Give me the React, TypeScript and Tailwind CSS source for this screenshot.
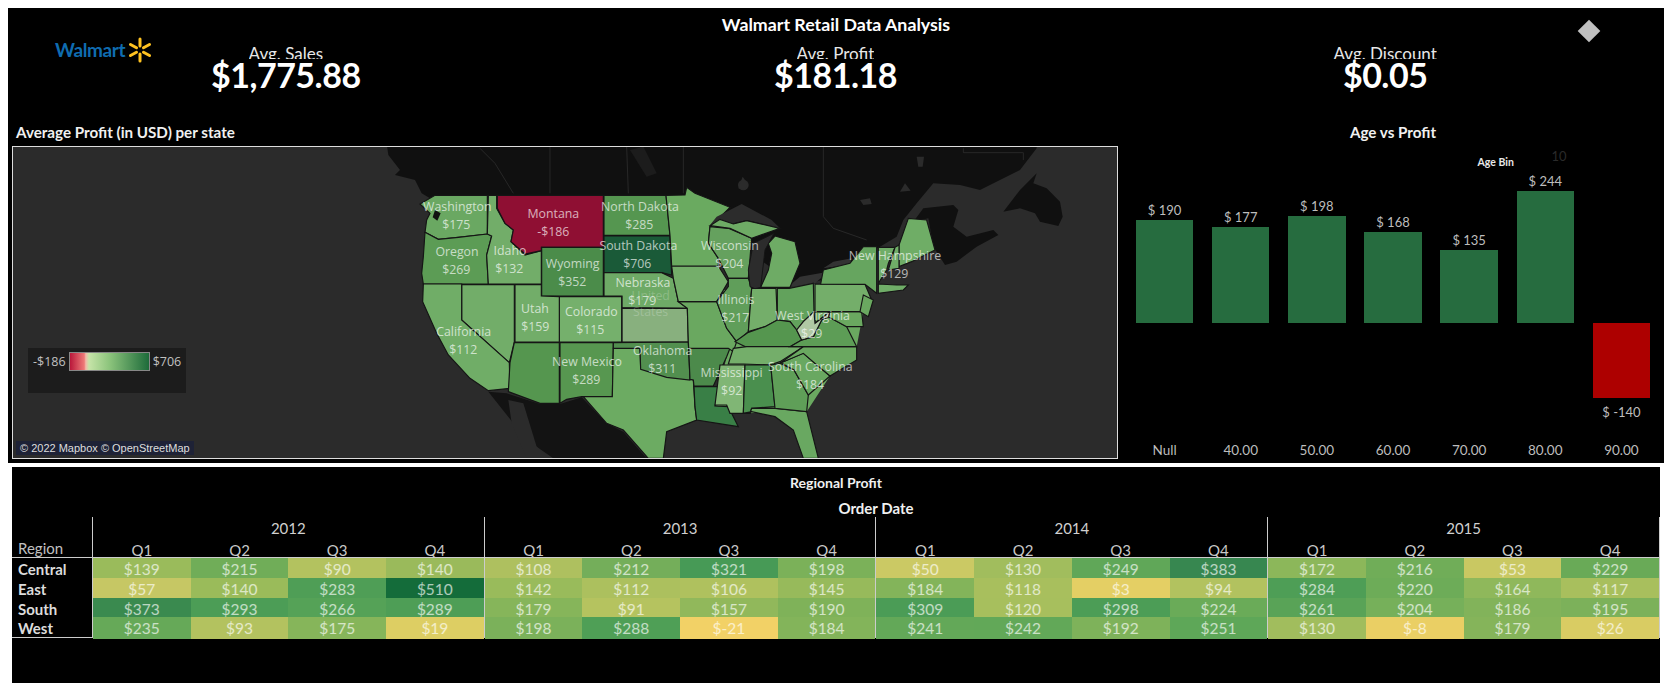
import React from "react";

type Shape = { p: string; f: string };

const west: Shape[] = [
  { p: "1030,480 1115,475 1230,475 1305,462 1455,463 1450,545 1430,650 1350,738 1280,845 1090,850 1005,825 1040,680", f: "#6aa860" },
  { p: "120,222 165,196 322,196 322,312 235,322 175,328 135,307 140,270 150,250", f: "#6aa862" },
  { p: "135,307 175,328 235,322 322,312 335,318 320,375 325,462 130,462 125,430 130,380", f: "#5c9c55" },
  { p: "325,196 350,196 350,235 375,280 400,300 393,335 435,375 484,362 484,462 325,462 320,375 335,318 322,312", f: "#72ad69" },
  { p: "352,196 670,196 670,352 484,352 484,362 435,372 393,335 400,300 375,280 352,235", f: "#8f0f33" },
  { p: "672,196 858,196 870,316 672,316", f: "#559650" },
  { p: "672,318 870,318 875,435 845,428 672,428", f: "#1a5a38" },
  { p: "485,352 670,352 670,498 485,498", f: "#4b8c4a" },
  { p: "672,428 845,428 880,445 895,515 922,535 726,533 726,498 672,498", f: "#6eaa66" },
  { p: "726,535 922,535 925,636 726,636", f: "#88b07e" },
  { p: "538,500 725,500 725,636 538,636", f: "#75b06c" },
  { p: "405,464 484,464 484,498 538,500 538,636 405,636", f: "#72ad69" },
  { p: "245,464 403,464 403,636 388,698 245,570", f: "#72ad69" },
  { p: "130,462 245,462 245,570 388,698 390,775 325,782 270,745 205,675 170,610 128,515", f: "#70ad67" },
  { p: "403,638 538,638 538,820 480,820 385,785 390,698", f: "#55964f" },
  { p: "540,638 700,638 697,800 605,800 560,808 540,820", f: "#579750" },
  { p: "700,655 780,655 782,715 860,735 940,750 945,830 950,870 860,905 850,985 805,985 730,900 680,880 610,800 697,800", f: "#6cab62" },
  { p: "700,638 925,636 930,750 860,742 782,718 780,655 700,655", f: "#528f4f" },
  { p: "926,655 1050,655 1040,680 1000,768 942,768 940,750 930,748", f: "#4c8a4b" },
  { p: "942,770 1020,770 1005,828 1045,830 1075,890 950,870 945,830", f: "#397f46" },
  { p: "895,515 1010,515 1040,595 1070,635 1060,665 1045,655 926,655 925,636 922,535", f: "#6aa860" },
  { p: "875,408 1015,408 1045,455 1010,515 895,515 880,445", f: "#74ae6a" },
  { p: "858,196 915,195 920,172 945,190 1050,232 990,290 985,340 1015,385 1015,408 875,408 870,316", f: "#6aaa60" },
  { p: "990,290 1045,295 1115,325 1105,445 1045,445 1015,385 985,340", f: "#65a15e" },
  { p: "1045,445 1105,445 1115,475 1105,605 1070,635 1040,595 1010,515 1045,470", f: "#609e5a" },
];

const east: Shape[] = [
  { p: "30,287 60,268 100,282 140,272 240,295 155,325 90,295", f: "#6eab65" },
  { p: "182,472 205,420 215,370 205,340 225,318 285,335 300,400 270,472", f: "#6eab65" },
  { p: "155,475 228,475 232,570 195,590 145,605", f: "#74ae6a" },
  { p: "232,475 268,475 340,460 342,545 310,575 290,600 270,575 232,570", f: "#62a25c" },
  { p: "105,635 145,607 195,590 232,570 270,575 290,600 305,630 270,650 140,652", f: "#55964f" },
  { p: "85,702 100,655 140,650 310,650 240,695 210,705 130,702", f: "#74ae6a" },
  { p: "45,825 60,705 135,705 130,850 90,850 80,825", f: "#80b675" },
  { p: "135,705 212,705 225,830 155,835 150,850 130,850", f: "#4a8f4e" },
  { p: "130,850 150,850 155,835 225,835 320,845 355,985 310,985 280,900 225,860 155,845", f: "#69a861" },
  { p: "212,705 240,700 282,720 325,795 320,845 225,835", f: "#5f9f58" },
  { p: "242,698 310,670 345,700 390,738 325,795 282,720", f: "#69a861" },
  { p: "240,700 310,650 470,650 470,690 390,738 345,700 310,670", f: "#6aa860" },
  { p: "270,650 305,630 340,620 365,570 385,560 440,590 470,650", f: "#5d9d56" },
  { p: "345,545 485,545 490,590 440,590 385,560 390,545 345,580", f: "#6aa860" },
  { p: "290,600 310,575 342,545 345,580 390,545 385,560 365,570 340,620 305,630", f: "#b0c9a4" },
  { p: "345,462 495,463 515,510 485,545 345,545", f: "#74ae6a" },
  { p: "362,462 370,420 450,400 490,350 530,350 530,490 495,463", f: "#66a55f" },
  { p: "490,495 520,510 505,560 480,545", f: "#6aa860" },
  { p: "597,345 625,265 680,270 705,360 635,395 597,410", f: "#6fad66" },
  { p: "535,352 585,352 565,400 560,420 535,460", f: "#70ad68" },
  { p: "585,352 597,345 597,415 565,420", f: "#70ad68" },
  { p: "535,462 590,465 625,465 610,480 535,490", f: "#70ad68" },
];

const labels: [string, string, number, number, number, number][] = [
  ["Washington", "$175", 232, 231, 229, 284],
  ["Montana", "-$186", 520, 252, 520, 305],
  ["North Dakota", "$285", 780, 231, 778, 284],
  ["Oregon", "$269", 231, 366, 229, 419],
  ["Idaho", "$132", 390, 362, 388, 416],
  ["Wyoming", "$352", 578, 402, 577, 455],
  ["South Dakota", "$706", 775, 347, 772, 401],
  ["Wisconsin", "$204", 1050, 347, 1048, 401],
  ["Nebraska", "$179", 789, 458, 787, 512],
  ["Illinois", "$217", 1068, 510, 1066, 563],
  ["Utah", "$159", 465, 537, 466, 590],
  ["Colorado", "$115", 634, 545, 631, 599],
  ["California", "$112", 251, 605, 250, 658],
  ["Oklahoma", "$311", 848, 662, 847, 716],
  ["New Mexico", "$289", 621, 695, 619, 749],
  ["Mississippi", "$92", 1055, 728, 1055, 781],
  ["New Hampshire", "$129", 1545, 378, 1543, 431],
  ["West Virginia", "$29", 1298, 558, 1295, 611],
  ["South Carolina", "$184", 1291, 711, 1290, 764],
];

const bars = [
  { axis: "Null", v: 190 },
  { axis: "40.00", v: 177 },
  { axis: "50.00", v: 198 },
  { axis: "60.00", v: 168 },
  { axis: "70.00", v: 135 },
  { axis: "80.00", v: 244 },
  { axis: "90.00", v: -140 },
];

const regions = ["Central", "East", "South", "West"];
const heat: { year: string; rows: [string, string][][] }[] = [
  {
    year: "2012",
    rows: [
      [["$139", "#9abb5b"], ["$215", "#70ad58"], ["$90", "#b3c25f"], ["$140", "#9aba5b"]],
      [["$57", "#c6c764"], ["$140", "#9abb5a"], ["$283", "#4f9e56"], ["$510", "#146c3a"]],
      [["$373", "#3a8a4f"], ["$293", "#4c9d56"], ["$266", "#55a257"], ["$289", "#4e9e56"]],
      [["$235", "#66a958"], ["$93", "#b3c25f"], ["$175", "#86b55a"], ["$19", "#ddce63"]],
    ],
  },
  {
    year: "2013",
    rows: [
      [["$108", "#aec05f"], ["$212", "#74ae5a"], ["$321", "#479a56"], ["$198", "#7bb159"]],
      [["$142", "#99bb5b"], ["$112", "#acc05e"], ["$106", "#afc15e"], ["$145", "#97ba5b"]],
      [["$179", "#86b55a"], ["$91", "#b5c35f"], ["$157", "#91b85b"], ["$190", "#7fb259"]],
      [["$198", "#7bb15a"], ["$288", "#4f9f56"], ["$-21", "#f2d166"], ["$184", "#83b45a"]],
    ],
  },
  {
    year: "2014",
    rows: [
      [["$50", "#cbc964"], ["$130", "#a1bd5d"], ["$249", "#60a758"], ["$383", "#378750"]],
      [["$184", "#83b45a"], ["$118", "#a8bf5d"], ["$3", "#e4cf64"], ["$94", "#b2c25f"]],
      [["$309", "#4b9c56"], ["$120", "#a7bf5d"], ["$298", "#4c9d56"], ["$224", "#6aab58"]],
      [["$241", "#63a858"], ["$242", "#62a858"], ["$192", "#7eb25a"], ["$251", "#5ea758"]],
    ],
  },
  {
    year: "2015",
    rows: [
      [["$172", "#8cb75a"], ["$216", "#70ad58"], ["$53", "#c9c862"], ["$229", "#69aa57"]],
      [["$284", "#4e9e56"], ["$220", "#6dac58"], ["$164", "#8fb85b"], ["$117", "#a8bf5d"]],
      [["$261", "#59a357"], ["$204", "#76b05a"], ["$186", "#82b35a"], ["$195", "#7cb15a"]],
      [["$130", "#a1bd5d"], ["$-8", "#eacf64"], ["$179", "#85b45a"], ["$26", "#d9cc63"]],
    ],
  },
];

function Kpi({ label, value }: { label: string; value: string }) {
  return (
    <div className="flex flex-col items-center">
      <div className="h-[15px] overflow-hidden pt-[1px] text-[17px] leading-[18px] text-[#e8e8e8]">{label}</div>
      <div className="-mt-[1px] text-[34px] font-bold leading-[34px] tracking-[-0.5px] text-white">{value}</div>
    </div>
  );
}

function UsMap() {
  return (
    <svg viewBox="13 147 1104 311" className="absolute inset-0 h-full w-full">
      <rect x="13" y="147" width="1104" height="311" fill="#2b2b2b" />
      <g transform="translate(380 130) scale(0.33333)">
        <polygon points="20,40 25,75 60,120 45,135 105,150 125,190 150,205 900,205 1000,285 1250,470 1400,430 1450,380 1550,320 1570,270 1610,220 1660,160 1740,165 1800,180 1920,120 1970,55 1970,40" fill="#101010" />
        <polygon points="325,785 380,790 480,822 540,822 605,802 680,880 730,905 800,985 800,1000 520,1000 400,880" fill="#131313" />
        <polygon points="385,810 430,820 470,950 520,985 440,985 395,880" fill="#2b2b2b" />
        <polygon points="760,905 850,905 850,985 800,985" fill="#131313" />
        <polyline points="510,50 510,190" stroke="#333333" strokeWidth="2" fill="none" />
        <polyline points="740,50 745,190" stroke="#333333" strokeWidth="2" fill="none" />
        <polyline points="910,50 910,190" stroke="#333333" strokeWidth="2" fill="none" />
        <polyline points="300,55 345,100 400,190" stroke="#333333" strokeWidth="2" fill="none" />
        <circle cx="1090" cy="165" r="16" fill="#2b2b2b" />
        <polygon points="750,60 790,50 830,130 800,140" fill="#1c1c1c" />
        {west.map((s, i) => (
          <polygon key={s.p} points={s.p} fill={s.f} stroke={i === 0 ? "none" : "#151515"} strokeWidth="3.5" />
        ))}
        <polygon points="165,240 182,250 172,272 158,262" fill="#101010" />
      </g>
      <g transform="translate(700 130) scale(0.33333)">
        <polygon points="640,275 670,235 760,225 775,240 760,290 800,320 880,300 895,315 830,350 770,395 735,405 700,350 685,265" fill="#101010" />
        <polygon points="910,245 960,180 1010,130 1000,160 1040,175 1080,215 1088,260 1075,288 1020,275 1005,250 960,235" fill="#101010" />
        <polyline points="370,50 370,260 400,295 500,330" stroke="#333333" strokeWidth="2" fill="none" />
        <polyline points="790,55 790,68 970,68 970,90" stroke="#333333" strokeWidth="2" fill="none" />
        <polygon points="128,140 142,160 135,180 115,175" fill="#2b2b2b" />
        <polygon points="480,210 510,205 515,222 490,225" fill="#2b2b2b" />
        <polygon points="615,160 632,182 600,185" fill="#2b2b2b" />
        <polygon points="650,80 672,80 668,110 655,110" fill="#2b2b2b" />
        <polygon points="30,285 50,260 125,222 215,270 240,295 140,270 100,280" fill="#2c2c2c" />
        <polygon points="270,465 300,440 385,425 345,460 300,482" fill="#333333" />
        <polygon points="370,415 400,395 455,385 450,405 390,412" fill="#333333" />
        {east.map((s) => (
          <polygon key={s.p} points={s.p} fill={s.f} stroke="#151515" strokeWidth="3.5" />
        ))}
        <polygon points="150,470 145,420 160,340 222,310 195,360 182,472 165,476" fill="#2c2c2c" stroke="#151515" strokeWidth="3" />
      </g>
      <g transform="translate(380 130) scale(0.33333)" className="font-['Open_Sans',sans-serif]" fontSize="37" textAnchor="middle" dominantBaseline="central">
        <text x="812" y="497" fill="#ffffff" fillOpacity="0.22">United</text>
        <text x="812" y="545" fill="#ffffff" fillOpacity="0.22">States</text>
        {labels.map(([name, val, x1, y1, x2, y2]) => (
          <g key={name} fill="#ffffff" fillOpacity="0.68">
            <text x={x1} y={y1}>{name}</text>
            <text x={x2} y={y2}>{val}</text>
          </g>
        ))}
      </g>
    </svg>
  );
}

function AgeChart() {
  return (
    <div className="relative grid h-[317px] grid-cols-7">
      <span className="absolute left-[351px] top-[9px] text-[10.5px] font-bold leading-[14px] text-[#e8e8e8]">Age Bin</span>
      <span className="absolute left-[425px] top-[3px] text-[13px] leading-[14px] text-[#2a2a2a]">10</span>
      {bars.map((b) => (
        <div key={b.axis} className="flex flex-col items-center">
          <div className="flex h-[177px] flex-col items-center justify-end">
            {b.v > 0 && (
              <>
                <span className="mb-[2px] text-[13px] leading-[16px] text-[#bdbdbd]">$ {b.v}</span>
                <div className="w-[57.5px] bg-[#266c3f]" style={{ height: b.v * 0.541 }} />
              </>
            )}
          </div>
          <div className="flex h-[116px] flex-col items-center">
            {b.v < 0 && (
              <>
                <div className="w-[57.5px] bg-[#ad0000]" style={{ height: -b.v * 0.536 }} />
                <span className="mt-[6px] text-[13px] leading-[16px] text-[#bdbdbd]">$ {b.v}</span>
              </>
            )}
          </div>
          <div className="flex h-[22px] items-center text-[13.5px] text-[#bdbdbd]">{b.axis}</div>
        </div>
      ))}
    </div>
  );
}

function YearColumn({ year, rows }: { year: string; rows: [string, string][][] }) {
  return (
    <div className="w-[392px] border-l border-[#cccccc]">
      <div className="flex h-[20px] items-center justify-center pt-[2px] text-[15px] text-[#d0d0d0]">{year}</div>
      <div className="grid h-[20px] grid-cols-4 items-center pt-[2px] text-center text-[15px] text-[#c8c8c8]">
        {["Q1", "Q2", "Q3", "Q4"].map((q) => (
          <span key={q}>{q}</span>
        ))}
      </div>
      <div className="border-y border-[#cccccc]">
        {rows.map((row, i) => (
          <div key={i} className="grid h-[19.75px] grid-cols-4">
            {row.map(([v, c], j) => (
              <div key={j} className="text-center text-[15.5px] leading-[22px] text-white/65" style={{ backgroundColor: c }}>
                {v}
              </div>
            ))}
          </div>
        ))}
      </div>
    </div>
  );
}

export default function App() {
  return (
    <div className="h-[694px] w-full overflow-hidden bg-white pl-[8px] pr-[7px] pt-[8px] font-['Lato',sans-serif]">
      <div className="relative flex h-[455px] flex-col bg-black">
        <div className="absolute left-[47px] top-[28px] flex items-center gap-[3px]">
          <span className="text-[19px] font-bold tracking-[-0.4px] text-[#0f6cb0]">Walmart</span>
          <svg width="24" height="26" viewBox="0 0 24 26" fill="none" stroke="#ffc220" strokeWidth="3" strokeLinecap="round">
            <path d="M12 2v7M12 17v7M2.500 7.500l6 3.200M15.500 15.300l6 3.200M21.500 7.500l-6 3.200M8.500 15.300l-6 3.200" />
          </svg>
        </div>
        <div className="absolute left-[1573px] top-[15px] h-[16px] w-[16px] rotate-45 bg-[#c0c0c0]" />
        <h1 className="mt-[6px] h-[20px] text-center text-[17.8px] font-bold leading-[20px] text-white">Walmart Retail Data Analysis</h1>
        <div className="mt-[10px] grid h-[78px] grid-cols-3 pl-[3px] pr-[4px]">
          <Kpi label="Avg. Sales" value="$1,775.88" />
          <Kpi label="Avg. Profit" value="$181.18" />
          <Kpi label="Avg. Discount" value="$0.05" />
        </div>
        <div className="flex">
          <div className="ml-[4px] w-[1106px]">
            <h2 className="flex h-[24px] items-center pb-[4px] pl-[4px] text-[15.2px] font-bold text-[#f0f0f0]">Average Profit (in USD) per state</h2>
            <div className="relative h-[313px] border border-[#dddddd] bg-[#2b2b2b]">
              <UsMap />
              <div className="absolute left-[15px] top-[201px] flex h-[45px] w-[158px] items-start gap-[3px] bg-[#1c1c1c] pl-[5px] pt-[4px] font-['Open_Sans',sans-serif] text-[12.5px] leading-[19px] text-[#c0c0c0]">
                <span>-$186</span>
                <div className="h-[19px] w-[81px] border border-[#888888] bg-[linear-gradient(to_right,#b9173a,#ee7a78_18%,#f4b8a8_20%,#c6e4a8_24%,#8cc47c_50%,#1d6b3a)]" />
                <span>$706</span>
              </div>
              <div className="absolute bottom-[3px] left-[3px] h-[14px] bg-[#1e2236] px-[4px] font-['Liberation_Sans',sans-serif] text-[11px] leading-[14px] text-[#dddddd]">© 2022 Mapbox © OpenStreetMap</div>
            </div>
          </div>
          <div className="ml-[8.5px] w-[533px]">
            <h2 className="flex h-[24px] items-center justify-center pb-[4px] text-[15.2px] font-bold text-[#f0f0f0]">Age vs Profit</h2>
            <AgeChart />
          </div>
        </div>
      </div>
      <div className="ml-[4px] mr-[4px] mt-[4px] h-[216px] bg-black">
        <div className="flex h-[30px] items-center justify-center text-[14px] font-bold text-[#f0f0f0]">Regional Profit</div>
        <div className="flex h-[20px] items-end pb-[2px] pl-[80px]">
          <span className="w-[1568px] text-center text-[15px] font-bold leading-[14px] text-[#f0f0f0]">Order Date</span>
        </div>
        <div className="flex">
          <div className="w-[80px]">
            <div className="h-[20px]" />
            <div className="flex h-[20px] items-center pl-[6px] pt-[2px] text-[15px] text-[#c0c0c0]">Region</div>
            <div className="border-y border-[#cccccc]">
              {regions.map((r) => (
                <div key={r} className="h-[19.75px] pl-[6px] text-[15px] font-bold leading-[22px] text-[#dcdcdc]">{r}</div>
              ))}
            </div>
          </div>
          {heat.map((y) => (
            <YearColumn key={y.year} year={y.year} rows={y.rows} />
          ))}
          <div className="w-px bg-[#cccccc]" />
        </div>
      </div>
    </div>
  );
}
